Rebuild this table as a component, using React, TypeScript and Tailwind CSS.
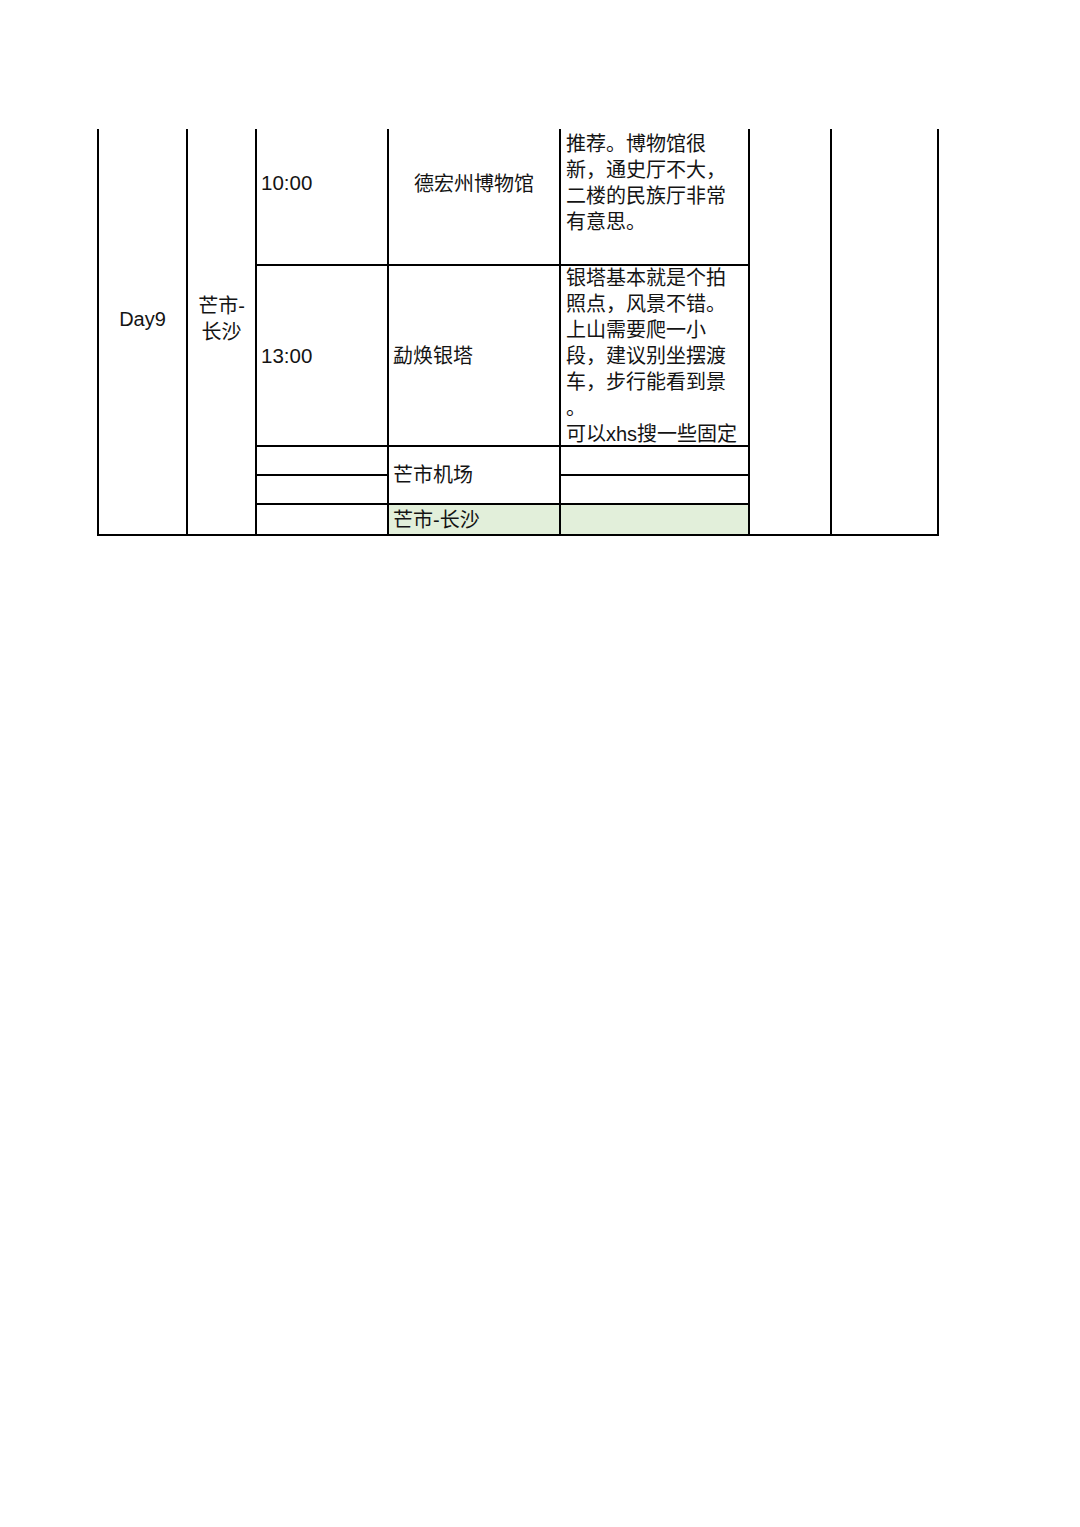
import React from "react";

const font = { fontFamily: '"Liberation Sans", "Noto Sans CJK SC", sans-serif' };

function Lines({ lines }: { lines: string[] }) {
  return (
    <>
      {lines.map((l, i) => (
        <div key={i} className="whitespace-nowrap leading-[26px] h-[26px] shrink-0">
          {l}
        </div>
      ))}
    </>
  );
}

export default function App() {
  return (
    <div className="w-[1080px] h-[1527px] bg-white text-[#141414] text-[20px]" style={font}>
      <div className="pt-[129px] pl-[97px]">
        <div className="grid w-[842px] bg-black gap-[2px] px-[2px] pb-[2px] grid-cols-[87px_67px_130px_170px_187px_80px_105px] grid-rows-[135px_179px_27px_27px_29px]">
          {/* Col 1 */}
          <div className="col-start-1 row-start-1 row-span-5 bg-white flex items-center justify-center pb-[26px]">
            <span className="leading-[26px]">Day9</span>
          </div>
          {/* Col 2 */}
          <div className="col-start-2 row-start-1 row-span-5 bg-white flex flex-col items-center justify-center pb-[26px] text-center">
            <div className="leading-[26px]">芒市-</div>
            <div className="leading-[26px]">长沙</div>
          </div>
          {/* Col 3 */}
          <div className="col-start-3 row-start-1 bg-white flex items-center pl-[4px] pb-[28px]">
            <span className="leading-[26px] text-[20.5px]">10:00</span>
          </div>
          <div className="col-start-3 row-start-2 bg-white flex items-center pl-[4px]">
            <span className="leading-[26px] text-[20.5px]">13:00</span>
          </div>
          <div className="col-start-3 row-start-3 bg-white" />
          <div className="col-start-3 row-start-4 bg-white" />
          <div className="col-start-3 row-start-5 bg-white" />
          {/* Col 4 */}
          <div className="col-start-4 row-start-1 bg-white flex items-center justify-center pb-[26px]">
            <span className="leading-[26px]">德宏州博物馆</span>
          </div>
          <div className="col-start-4 row-start-2 bg-white flex items-center pl-[4px]">
            <span className="leading-[26px]">勐焕银塔</span>
          </div>
          <div className="col-start-4 row-start-3 row-span-2 bg-white flex items-center pl-[4px]">
            <span className="leading-[26px]">芒市机场</span>
          </div>
          <div className="col-start-4 row-start-5 bg-[#e2efda] flex items-center pl-[4px]">
            <span className="leading-[26px]">芒市-长沙</span>
          </div>
          {/* Col 5 */}
          <div className="col-start-5 row-start-1 bg-white flex flex-col pl-[5px] pt-[2px] overflow-hidden">
            <Lines lines={["推荐。博物馆很", "新，通史厅不大，", "二楼的民族厅非常", "有意思。"]} />
          </div>
          <div className="col-start-5 row-start-2 bg-white flex flex-col justify-center pl-[5px] pt-[1px] overflow-hidden">
            <Lines
              lines={[
                "银塔基本就是个拍",
                "照点，风景不错。",
                "上山需要爬一小",
                "段，建议别坐摆渡",
                "车，步行能看到景",
                "。",
                "可以xhs搜一些固定",
              ]}
            />
          </div>
          <div className="col-start-5 row-start-3 bg-white" />
          <div className="col-start-5 row-start-4 bg-white" />
          <div className="col-start-5 row-start-5 bg-[#e2efda]" />
          {/* Col 6 & 7 */}
          <div className="col-start-6 row-start-1 row-span-5 bg-white" />
          <div className="col-start-7 row-start-1 row-span-5 bg-white" />
        </div>
      </div>
    </div>
  );
}
